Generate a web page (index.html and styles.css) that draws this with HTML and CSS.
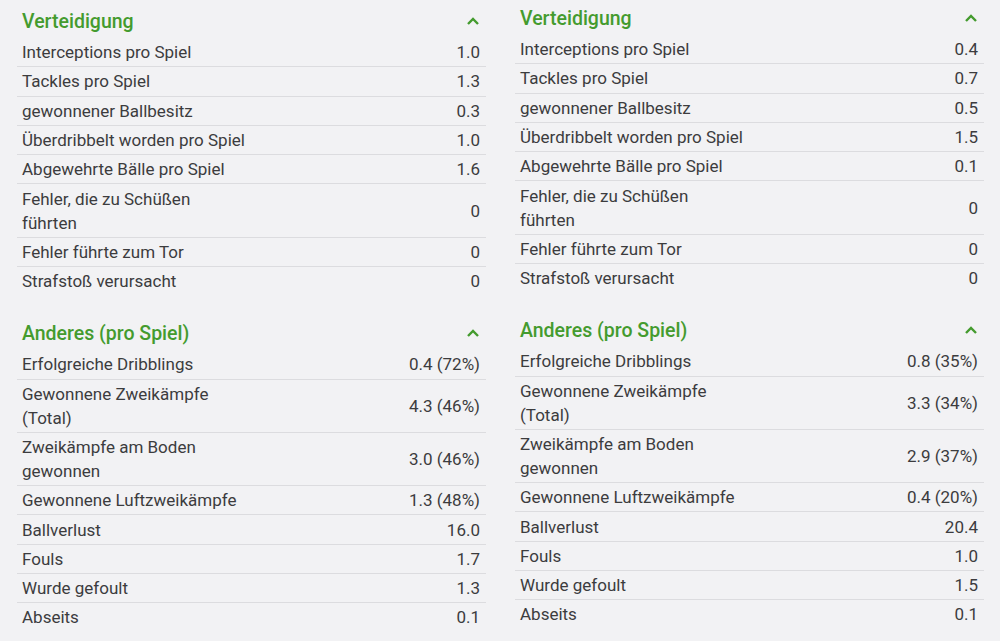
FILE: index.html
```html
<!DOCTYPE html>
<html lang="de">
<head>
<meta charset="utf-8">
<link rel="stylesheet" href="styles.css">
</head>
<body>
<div class="page">
  <div class="panel panel-left">
    <section class="group">
      <div class="group-head"><span class="title">Verteidigung</span><svg class="chev" viewBox="0 0 12 8" width="12" height="8"><path d="M1 7 L6 2 L11 7" fill="none" stroke="currentColor" stroke-width="2.4"/></svg></div>
      <div class="row"><span class="label">Interceptions pro Spiel</span><span class="val">1.0</span></div>
      <div class="row"><span class="label">Tackles pro Spiel</span><span class="val">1.3</span></div>
      <div class="row"><span class="label">gewonnener Ballbesitz</span><span class="val">0.3</span></div>
      <div class="row"><span class="label">Überdribbelt worden pro Spiel</span><span class="val">1.0</span></div>
      <div class="row"><span class="label">Abgewehrte Bälle pro Spiel</span><span class="val">1.6</span></div>
      <div class="row"><span class="label">Fehler, die zu Schüßen<br>führten</span><span class="val">0</span></div>
      <div class="row"><span class="label">Fehler führte zum Tor</span><span class="val">0</span></div>
      <div class="row last"><span class="label">Strafstoß verursacht</span><span class="val">0</span></div>
    </section>
    <section class="group">
      <div class="group-head"><span class="title">Anderes (pro Spiel)</span><svg class="chev" viewBox="0 0 12 8" width="12" height="8"><path d="M1 7 L6 2 L11 7" fill="none" stroke="currentColor" stroke-width="2.4"/></svg></div>
      <div class="row"><span class="label">Erfolgreiche Dribblings</span><span class="val">0.4 (72%)</span></div>
      <div class="row"><span class="label">Gewonnene Zweikämpfe<br>(Total)</span><span class="val">4.3 (46%)</span></div>
      <div class="row"><span class="label">Zweikämpfe am Boden<br>gewonnen</span><span class="val">3.0 (46%)</span></div>
      <div class="row"><span class="label">Gewonnene Luftzweikämpfe</span><span class="val">1.3 (48%)</span></div>
      <div class="row"><span class="label">Ballverlust</span><span class="val">16.0</span></div>
      <div class="row"><span class="label">Fouls</span><span class="val">1.7</span></div>
      <div class="row"><span class="label">Wurde gefoult</span><span class="val">1.3</span></div>
      <div class="row last"><span class="label">Abseits</span><span class="val">0.1</span></div>
    </section>
  </div>
  <div class="panel panel-right">
    <section class="group">
      <div class="group-head"><span class="title">Verteidigung</span><svg class="chev" viewBox="0 0 12 8" width="12" height="8"><path d="M1 7 L6 2 L11 7" fill="none" stroke="currentColor" stroke-width="2.4"/></svg></div>
      <div class="row"><span class="label">Interceptions pro Spiel</span><span class="val">0.4</span></div>
      <div class="row"><span class="label">Tackles pro Spiel</span><span class="val">0.7</span></div>
      <div class="row"><span class="label">gewonnener Ballbesitz</span><span class="val">0.5</span></div>
      <div class="row"><span class="label">Überdribbelt worden pro Spiel</span><span class="val">1.5</span></div>
      <div class="row"><span class="label">Abgewehrte Bälle pro Spiel</span><span class="val">0.1</span></div>
      <div class="row"><span class="label">Fehler, die zu Schüßen<br>führten</span><span class="val">0</span></div>
      <div class="row"><span class="label">Fehler führte zum Tor</span><span class="val">0</span></div>
      <div class="row last"><span class="label">Strafstoß verursacht</span><span class="val">0</span></div>
    </section>
    <section class="group">
      <div class="group-head"><span class="title">Anderes (pro Spiel)</span><svg class="chev" viewBox="0 0 12 8" width="12" height="8"><path d="M1 7 L6 2 L11 7" fill="none" stroke="currentColor" stroke-width="2.4"/></svg></div>
      <div class="row"><span class="label">Erfolgreiche Dribblings</span><span class="val">0.8 (35%)</span></div>
      <div class="row"><span class="label">Gewonnene Zweikämpfe<br>(Total)</span><span class="val">3.3 (34%)</span></div>
      <div class="row"><span class="label">Zweikämpfe am Boden<br>gewonnen</span><span class="val">2.9 (37%)</span></div>
      <div class="row"><span class="label">Gewonnene Luftzweikämpfe</span><span class="val">0.4 (20%)</span></div>
      <div class="row"><span class="label">Ballverlust</span><span class="val">20.4</span></div>
      <div class="row"><span class="label">Fouls</span><span class="val">1.0</span></div>
      <div class="row"><span class="label">Wurde gefoult</span><span class="val">1.5</span></div>
      <div class="row last"><span class="label">Abseits</span><span class="val">0.1</span></div>
    </section>
  </div>
</div>
</body>
</html>
```
FILE: styles.css
```css
html, body {
  margin: 0;
  padding: 0;
}
body {
  background: #f2f2f4;
  font-family: Roboto, "Liberation Sans", sans-serif;
  color: #3c3c3e;
  width: 1000px;
  height: 641px;
  overflow: hidden;
}
.page {
  display: flex;
  gap: 29px;
  padding-left: 17px;
}
.panel {
  width: 469px;
  padding-top: 4px;
}
.panel-right {
  padding-top: 1px;
}
.group {
  margin-bottom: 21px;
}
.group-head {
  height: 34px;
  display: flex;
  align-items: center;
  justify-content: space-between;
  padding: 0 7px 0 5px;
  color: #449b2e;
}
.title {
  font-size: 19.5px;
  font-weight: 500;
}
.chev {
  display: block;
  color: #449b2e;
}
.row {
  display: flex;
  align-items: center;
  justify-content: space-between;
  padding: 2.15px 6px 2.15px 5px;
  font-size: 17px;
  line-height: 24px;
  border-bottom: 1px solid #dcdcdf;
}
.row.last {
  border-bottom: none;
}
.val {
  color: #3c3c3e;
}
```
